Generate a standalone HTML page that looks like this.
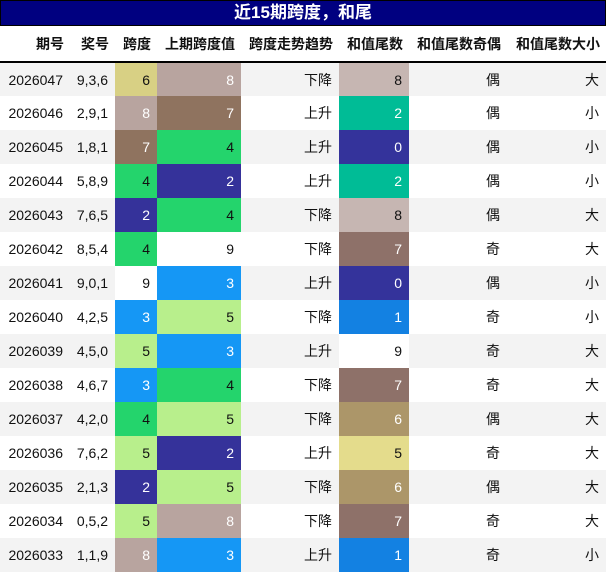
<!DOCTYPE html><html><head><meta charset="utf-8"><style>
*{margin:0;padding:0;box-sizing:border-box}
body{width:606px;height:573px;background:#fff;font-family:"Liberation Sans","Noto Sans CJK SC",sans-serif;font-size:14px;color:#111;overflow:hidden}
.t{height:26px;background:#000080;border:1px solid #000;color:#fff;font-weight:bold;font-size:17px;text-align:center;line-height:24px}
table{border-collapse:collapse;table-layout:fixed;width:606px}
th{height:36px;font-weight:bold;text-align:right;padding-right:6px;font-size:14px;border-bottom:2px solid #000}
td{height:34px;text-align:right;padding-right:7px}
tr.o td{background:#f3f3f3}
td.w{color:#fff}
</style></head><body>
<div class="t">近15期跨度，和尾</div>
<table>
<colgroup><col style="width:70px"><col style="width:45px"><col style="width:42px"><col style="width:84px"><col style="width:98px"><col style="width:70px"><col style="width:98px"><col style="width:99px"></colgroup>
<tr><th>期号</th><th>奖号</th><th>跨度</th><th>上期跨度值</th><th>跨度走势趋势</th><th>和值尾数</th><th>和值尾数奇偶</th><th>和值尾数大小</th></tr>
<tbody id="b"></tbody>
</table>
<script>
var S={6:['#d8d084',0],8:['#b8a49f',1],7:['#8f735f',1],4:['#24d46c',0],2:['#35329a',1],9:['#fff',0],3:['#1597f5',1],5:['#b8ef8c',0]};
var H={8:['#c6b6b2',0],2:['#00bc96',1],0:['#34339b',1],7:['#8e7169',1],1:['#1381e2',1],9:['#fff',0],6:['#ac9669',1],5:['#e4dc8c',0]};
var d=[["2026047","9,3,6",6,8,"下降",8,"偶","大"],["2026046","2,9,1",8,7,"上升",2,"偶","小"],["2026045","1,8,1",7,4,"上升",0,"偶","小"],["2026044","5,8,9",4,2,"上升",2,"偶","小"],["2026043","7,6,5",2,4,"下降",8,"偶","大"],["2026042","8,5,4",4,9,"下降",7,"奇","大"],["2026041","9,0,1",9,3,"上升",0,"偶","小"],["2026040","4,2,5",3,5,"下降",1,"奇","小"],["2026039","4,5,0",5,3,"上升",9,"奇","大"],["2026038","4,6,7",3,4,"下降",7,"奇","大"],["2026037","4,2,0",4,5,"下降",6,"偶","大"],["2026036","7,6,2",5,2,"上升",5,"奇","大"],["2026035","2,1,3",2,5,"下降",6,"偶","大"],["2026034","0,5,2",5,8,"下降",7,"奇","大"],["2026033","1,1,9",8,3,"上升",1,"奇","小"]];
var h='';d.forEach(function(r,i){function c(v,m){var x=m[v];return '<td'+(x[1]?' class="w"':'')+' style="background:'+x[0]+'">'+v+'</td>';}
h+='<tr'+(i%2==0?' class="o"':'')+'><td>'+r[0]+'</td><td>'+r[1]+'</td>'+c(r[2],S)+c(r[3],S)+'<td>'+r[4]+'</td>'+c(r[5],H)+'<td>'+r[6]+'</td><td>'+r[7]+'</td></tr>';});
document.getElementById('b').innerHTML=h;
</script>
</body></html>
